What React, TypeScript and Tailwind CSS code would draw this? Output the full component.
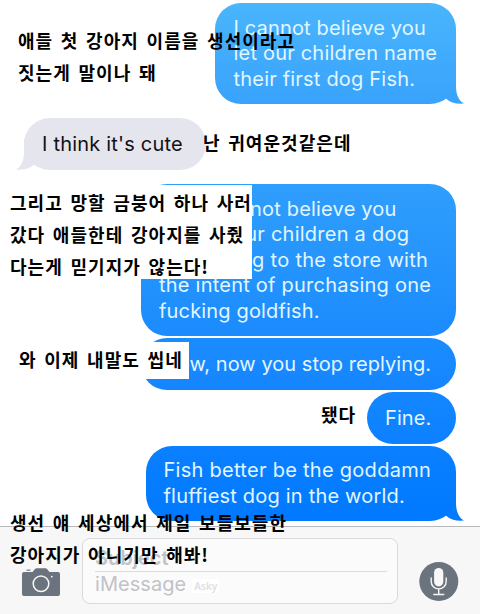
import React from 'react'

type Line = { text: string; spacing: string }

const Tail = ({ from, to, className }: { from: string; to: string; className: string }) => {
    const id = `tail-${to.slice(1)}`
    return (
        <svg viewBox="0 0 30 32" className={`absolute bottom-0 h-8 w-[30px] ${className}`} fill={`url(#${id})`}>
            <defs>
                <linearGradient id={id} x1="0" y1="0" x2="0" y2="32" gradientUnits="userSpaceOnUse">
                    <stop offset="0" stopColor={from} />
                    <stop offset="1" stopColor={to} />
                </linearGradient>
            </defs>
            <path d="M22 0 V14 C22 22 24.5 28.5 30 31.6 C22 32.2 16 30.4 12.5 27 L2 22 Z" />
        </svg>
    )
}

const Bubble = ({ lines, className, tail }: { lines: Line[]; className: string; tail?: React.ReactNode }) => (
    <div className={`relative flex shrink-0 flex-col justify-center rounded-[26px] pt-px ${className}`}>
        {tail}
        {lines.map((line) => (
            <span key={line.text} className={`relative whitespace-nowrap text-[20px] leading-[25.6px] ${line.spacing}`}>
                {line.text}
            </span>
        ))}
    </div>
)

const Note = ({ lines, className }: { lines: string[]; className: string }) => (
    <div
        className={`absolute whitespace-nowrap font-['Noto_Sans_CJK_KR',sans-serif] text-[18px] font-bold leading-8 tracking-[1.05px] text-black [word-spacing:2.5px] ${className}`}
    >
        {lines.map((line) => (
            <div key={line}>{line}</div>
        ))}
    </div>
)

const CameraIcon = () => (
    <svg viewBox="0 0 38 28" className="h-7 w-[38px]" fill="#6b747e">
        <path d="M4.5 1.6 H8.5 V2.8 H4.5 Z" />
        <path d="M2 4 H10.5 L13 .9 Q13.6 .2 14.5 .2 H23.5 Q24.4 .2 25 .9 L27.5 4 H36 Q38 4 38 6 V26 Q38 28 36 28 H2 Q0 28 0 26 V6 Q0 4 2 4 Z" />
        <circle cx="19" cy="15.8" r="7.8" fill="none" stroke="#f7f7f7" strokeWidth="1.5" />
        <circle cx="29.8" cy="8.7" r="0.9" fill="#f7f7f7" />
    </svg>
)

const MicIcon = () => (
    <svg viewBox="0 0 40 40" className="h-10 w-10" fill="none" stroke="#f7f7f7" strokeWidth="1.4" strokeLinecap="round">
        <circle cx="19.8" cy="20.5" r="19.5" fill="#6b747e" stroke="none" />
        <rect x="15.1" y="7" width="9.2" height="18.4" rx="4.6" fill="#f7f7f7" stroke="none" />
        <path d="M12.2 17 V20.5 A7.5 7.4 0 0 0 27.2 20.5 V17 M19.7 28 V33.4 M14.8 33.5 H24.8" />
    </svg>
)

const App = () => {
    return (
        <div className="relative flex h-[614px] w-[480px] flex-col overflow-hidden bg-white font-['Inter',sans-serif] text-[#e2f6ff]">
            <main className="flex h-[526px] shrink-0 flex-col items-end pr-6 pt-[3px]">
                <Bubble
                    className="h-[101px] w-[241px] bg-linear-to-b from-[#49b5fd] to-[#39a3fc] pl-[18.5px]"
                    tail={<Tail from="#3ea9fc" to="#39a3fc" className="-right-2" />}
                    lines={[
                        { text: 'I cannot believe you', spacing: 'tracking-[0.16px]' },
                        { text: 'let our children name', spacing: 'tracking-[0.2px]' },
                        { text: 'their first dog Fish.', spacing: 'tracking-[0.2px]' },
                    ]}
                />
                <Bubble
                    className="ml-6 mt-[14px] h-[52px] w-[182px] self-start bg-[#e5e5ee] pl-[18px] text-[#111115]"
                    tail={<Tail from="#e5e5ee" to="#e5e5ee" className="-left-2 -scale-x-100" />}
                    lines={[{ text: "I think it's cute", spacing: 'tracking-[0.2px]' }]}
                />
                <Bubble
                    className="mt-[14px] h-[152px] w-[315px] bg-linear-to-b from-[#2f9efc] to-[#1b8bfe] pl-[18px]"
                    lines={[
                        { text: 'And I cannot believe you', spacing: 'tracking-[0.2px]' },
                        { text: 'bought our children a dog', spacing: 'tracking-[0.24px]' },
                        { text: 'after going to the store with', spacing: 'tracking-[0.3px]' },
                        { text: 'the intent of purchasing one', spacing: 'tracking-[0.23px]' },
                        { text: 'fucking goldfish.', spacing: 'tracking-[0.16px]' },
                    ]}
                />
                <Bubble
                    className="mt-[2px] h-[52px] w-[315px] bg-linear-to-b from-[#1b8cfe] to-[#1485ff] pl-[18px]"
                    lines={[{ text: 'Wow, now you stop replying.', spacing: 'tracking-[0.04px]' }]}
                />
                <Bubble
                    className="mt-[2px] h-[52px] w-[89px] bg-linear-to-b from-[#1487ff] to-[#0c80ff] pl-[18px]"
                    lines={[{ text: 'Fine.', spacing: 'tracking-[0.1px]' }]}
                />
                <Bubble
                    className="mt-[2px] h-[75px] w-[310px] bg-linear-to-b from-[#0b80ff] to-[#0079ff] pl-[17.5px]"
                    tail={<Tail from="#057cff" to="#0079ff" className="-right-2" />}
                    lines={[
                        { text: 'Fish better be the goddamn', spacing: 'tracking-[0.28px]' },
                        { text: 'fluffiest dog in the world.', spacing: 'tracking-[0.2px]' },
                    ]}
                />
            </main>

            <footer className="flex h-[88px] shrink-0 items-start border-t border-[#b9b9bd] bg-[#f7f7f7]">
                <div className="ml-[22px] mt-[41px]">
                    <CameraIcon />
                </div>
                <div className="ml-[22px] mt-[11px] flex h-[66px] w-[316px] flex-col rounded-[8px] border-[1.5px] border-[#d9d9de] bg-[#fbfbfb] pl-[12px] text-[20px] text-[#c2c2c7]">
                    <div className="mr-[10px] h-[33px] border-b border-[#dcdce0] pt-[6px] font-semibold leading-[26px]">
                        Subject
                    </div>
                    <div className="flex items-center leading-[24px]">
                        <span className="tracking-[0.05px]">iMessage</span>
                        <span className="ml-[6px] mt-[3px] h-[14px] bg-white px-[2px] font-['Noto_Sans',sans-serif] text-[10px] font-semibold leading-[14px] text-[#e0e0e3]">
                            Asky
                        </span>
                    </div>
                </div>
                <div className="ml-[21px] mt-[34px]">
                    <MicIcon />
                </div>
            </footer>

            {/* Korean captions laid over the chat */}
            <Note className="left-[18px] top-[24px]" lines={['애들 첫 강아지 이름을 생선이라고', '짓는게 말이나 돼']} />
            <Note className="left-[203px] top-[126px]" lines={['난 귀여운것같은데']} />
            <Note
                className="left-0 top-[185px] h-[94px] w-[252px] bg-white pl-[10px] pt-px"
                lines={['그리고 망할 금붕어 하나 사러', '갔다 애들한테 강아지를 사줬', '다는게 믿기지가 않는다!']}
            />
            <Note className="left-0 top-[342px] h-[37px] w-[189px] bg-white pl-[19px] pt-px" lines={['와 이제 내말도 씹네']} />
            <Note className="left-[321px] top-[398px]" lines={['됐다']} />
            <Note className="left-[10px] top-[506px]" lines={['생선 얘 세상에서 제일 보들보들한', '강아지가 아니기만 해봐!']} />
        </div>
    )
}

export default App
